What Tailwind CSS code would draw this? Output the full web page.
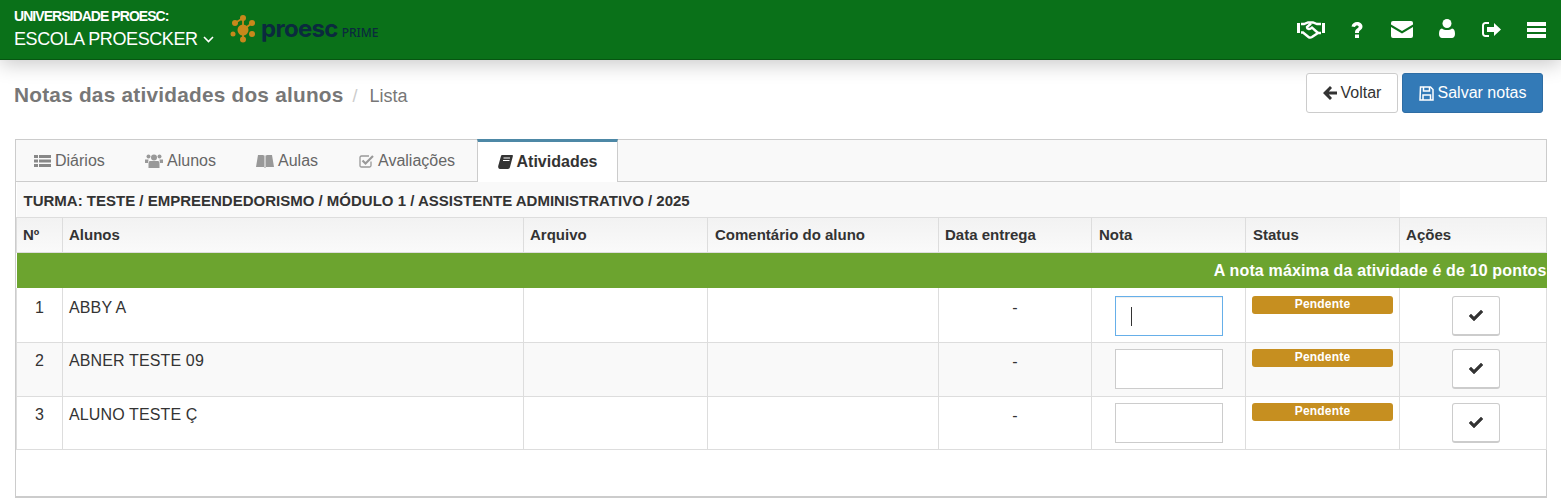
<!DOCTYPE html>
<html lang="pt"><head><meta charset="utf-8">
<script src="https://cdn.jsdelivr.net/npm/@tailwindcss/browser@4"></script>
</head>
<body class="bg-white font-['Liberation_Sans',Arial,sans-serif] text-[#333] overflow-hidden w-[1561px] h-[499px]">
<header class="h-[60px] bg-[#0a7119] border-b border-[#075512] flex items-center justify-between pl-[14px] pr-[15px] shadow-[0_4px_20px_rgba(0,0,0,0.22)] relative">
  <div class="flex items-start">
    <div class="w-[214px] text-white">
      <div class="text-[14px] leading-[16px] font-bold tracking-[-0.95px] mt-[-2px]">UNIVERSIDADE PROESC:</div>
      <div class="text-[18px] leading-[20px] mt-[5px] tracking-[-0.4px] flex items-center gap-[5px]">ESCOLA PROESCKER
        <svg width="11" height="7" viewBox="0 0 11 7" fill="none" stroke="#fff" stroke-width="1.6"><path d="M1 1l4.500 4.500L10 1"/></svg>
      </div>
    </div>
    <div class="flex items-center mt-[4px]">
      <svg width="30" height="30" viewBox="0 0 30 30" fill="#c8881b" stroke="#c8881b">
        <path stroke-width="1.8" fill="none" d="M7 9L15 4 15 25M24 9L15 16"/>
        <g stroke="none"><circle cx="15" cy="4" r="3"/><circle cx="7" cy="9" r="3"/><circle cx="24" cy="9" r="3"/><circle cx="15" cy="16" r="5.500"/><circle cx="5" cy="20" r="2.500"/><circle cx="24" cy="20" r="3"/><circle cx="15" cy="25.500" r="3"/></g>
      </svg>
      <span class="font-['Inter',sans-serif] text-[24px] leading-[30px] font-bold tracking-[-0.7px] text-[#0b2a3e] ml-[3px] -mt-[1px]">proesc</span>
      <span class="font-['Noto_Sans',sans-serif] text-[12px] leading-[14px] font-medium text-[#0b2a3e] ml-[4px] mt-[7px]">PRIME</span>
    </div>
  </div>
  <nav class="flex items-center text-white">
    <svg class="mr-[26px]" width="28" height="18" viewBox="0 0 28 18" fill="none" stroke="#fff" stroke-width="2.400"><path d="M4 3h3l4-1.500h5l4 1.500h4"/><path d="M1.500 2v10M26.500 2v10" stroke-width="3"/><path d="M4 11.500h2l5.500 4.500c1 .8 2.200.8 3.500 0l6-4 3 0"/><path d="M14 2.500l-4 3.500c0 2.500 3 2.500 5 .7l6 5.300"/></svg>
    <svg class="mr-[28px]" width="12" height="16" viewBox="0 0 12 16" fill="#fff"><path d="M4 12.500h4V16H4zM.5 4.500C1 1.500 3.500 0 6 0c3 0 5.500 2 5.500 4.500 0 2.500-1.500 3.200-2.500 3.900-.8.500-1 .9-1 2.600H4c0-2.500.6-3.500 1.900-4.300 1-.6 1.800-1 1.800-1.900 0-.8-.7-1.400-1.700-1.400-1 0-1.700.6-2.100 1.700z"/></svg>
    <svg class="mr-[26px]" width="22" height="17" viewBox="0 0 22 17" fill="#fff"><path d="M2 0h18a2 2 0 0 1 2 2v1.500L11 10 0 3.500V2a2 2 0 0 1 2-2z"/><path d="M0 6l11 6.500L22 6v9a2 2 0 0 1-2 2H2a2 2 0 0 1-2-2z"/></svg>
    <svg class="mr-[27px] -mt-[2px]" width="16" height="19" viewBox="0 0 16 19" fill="#fff"><circle cx="8" cy="4.500" r="4.500"/><path d="M3 9.500c1.200 1 3 1.500 5 1.500s3.800-.5 5-1.500c2 .3 3 2 3 5.500 0 2.500-1.500 4-3 4H3c-1.500 0-3-1.500-3-4 0-3.500 1-5.200 3-5.500z"/></svg>
    <svg class="mr-[26px]" width="19" height="15" viewBox="0 0 19 15" fill="#fff"><path d="M7 0v2H3.500C2.700 2 2 2.700 2 3.500v8c0 .8.700 1.500 1.500 1.500H7v2H3.500C1.500 15 0 13.500 0 11.500v-8C0 1.500 1.500 0 3.500 0z"/><path d="M12 1l7 6.500-7 6.500V10H5V5h7z"/></svg>
    <div class="w-[19px] flex flex-col gap-[2px]"><div class="h-[4px] bg-white"></div><div class="h-[4px] bg-white"></div><div class="h-[4px] bg-white"></div></div>
  </nav>
</header>
<main class="relative">
  <div class="flex items-start justify-between pl-[14px] pr-[18px] pt-[13px] h-[79px]">
    <div class="flex items-baseline mt-[9px]">
      <span class="text-[20.800px] leading-[26px] font-bold text-[#777] tracking-[0.23px]">Notas das atividades dos alunos</span>
      <span class="text-[18px] text-[#ccc] ml-[9px]">/</span>
      <span class="text-[18px] text-[#777] ml-[12px]">Lista</span>
    </div>
    <div class="flex gap-[4px]">
      <button class="w-[92px] h-[40px] bg-white border border-[#ccc] rounded-[3px] text-[16px] text-[#333] flex items-center justify-center gap-[4px]">
        <svg width="14" height="14" viewBox="0 0 14 14" fill="#333"><path d="M7 0l2 2-3.200 3.400H14v3.200H5.800L9 12l-2 2-7-7z"/></svg>Voltar</button>
      <button class="w-[141px] h-[40px] bg-[#337ab7] border border-[#2e6da4] rounded-[3px] text-[16px] text-white flex items-center justify-center gap-[4px]">
        <svg width="15" height="15" viewBox="0 0 15 15" fill="none" stroke="#fff" stroke-width="1.500"><path d="M1.500 1h10l2.500 2.500V14H1z"/><path d="M4.500 1v4h6V1M4 14V9h7.500v5"/></svg>Salvar notas</button>
    </div>
  </div>
  <section class="mx-[15px] w-[1532px] h-[359px] border border-[#ccc] border-b-2 bg-white">
    <div class="h-[42px] bg-[#f9f9f9] border-b border-[#ccc] flex text-[16px] text-[#666] pl-[18px] relative">
      <div class="flex items-center gap-[4px] w-[111px]"><svg width="17" height="12" viewBox="0 0 17 12" fill="#888"><path d="M0 0h4v3H0zM5 0h12v3H5zM0 4.500h4v3H0zM5 4.500h12v3H5zM0 9h4v3H0zM5 9h12v3H5z"/></svg>Diários</div>
      <div class="flex items-center gap-[4px] w-[111px]"><svg width="18" height="14" viewBox="0 0 18 14" fill="#999"><circle cx="9" cy="3.500" r="3"/><circle cx="3.500" cy="2.500" r="2"/><circle cx="14.500" cy="2.500" r="2"/><path d="M5 7h8c1 0 1.500 1 1.500 3v4h-11v-4c0-2 .5-3 1.500-3zM0 5.500h3.500L3 9H0zM14.500 5.500H18V9h-3z"/></svg>Alunos</div>
      <div class="flex items-center gap-[4px] w-[103px]"><svg width="18" height="14" viewBox="0 0 18 14" fill="#999"><path d="M2 1h5l2 1 2-1h5l2 12H10l-1 1-1-1H0z"/><path d="M9 2v11" stroke="#f9f9f9"/></svg>Aulas</div>
      <div class="flex items-center gap-[4px] w-[118px]"><svg width="15" height="14" viewBox="0 0 15 14" fill="none" stroke="#999" stroke-width="1.300"><path d="M12 7.500V11.500c0 1-.6 1.500-1.500 1.500h-8C1.500 13 1 12.500 1 11.500v-8C1 2.500 1.500 2 2.500 2H10"/><path d="M3.500 6.500L6.500 9.500 14 2" stroke-width="2.200"/></svg>Avaliações</div>
      <div class="w-[141px] h-[43px] -mt-[1px] bg-white border-x border-[#ccc] border-t-[3px] border-t-[#4d88a6] flex items-center justify-center gap-[4px] font-bold text-[#333]"><svg width="15" height="14" viewBox="0 0 15 14" fill="#333"><path d="M4 0h10c1 0 1 1 .8 1.500L12 12c-.2 1-1 2-2 2H2c-1.500 0-2-1.500-1.800-3L3 1c.2-.6.500-1 1-1z"/><path d="M5.500 3h6.500M5 5.500h6.500" stroke="#fff" stroke-width="1"/></svg>Atividades</div>
    </div>
    <table class="border-collapse table-fixed w-[1530px] text-[16px] text-[#333] tracking-[0.13px]">
      <colgroup><col class="w-[46px]"><col class="w-[461px]"><col class="w-[184px]"><col class="w-[231px]"><col class="w-[153px]"><col class="w-[154px]"><col class="w-[154px]"><col class="w-[147px]"></colgroup>
      <thead>
        <tr class="h-[35px]">
          <td colspan="7" class="bg-[#f9f9f9] text-[15px] font-bold pl-[7px] pt-[3px] border-b border-[#ddd] tracking-normal text-[#333]">TURMA: TESTE / EMPREENDEDORISMO / MÓDULO 1 / ASSISTENTE ADMINISTRATIVO / 2025</td>
          <td class="bg-white border-b border-[#ddd]"></td>
        </tr>
        <tr class="h-[35px] bg-gradient-to-b from-[#f2f2f2] to-[#fafafa] text-[15px] font-bold text-left tracking-normal">
          <th class="border border-t-0 border-[#ddd] pt-[2px] pl-[6px]">Nº</th>
          <th class="border border-t-0 border-[#ddd] pt-[2px] pl-[6px]">Alunos</th>
          <th class="border border-t-0 border-[#ddd] pt-[2px] pl-[6px]">Arquivo</th>
          <th class="border border-t-0 border-[#ddd] pt-[2px] pl-[7px]">Comentário do aluno</th>
          <th class="border border-t-0 border-[#ddd] pt-[2px] pl-[6px]">Data entrega</th>
          <th class="border border-t-0 border-[#ddd] pt-[2px] pl-[7px]">Nota</th>
          <th class="border border-t-0 border-[#ddd] pt-[2px] pl-[7px]">Status</th>
          <th class="border border-t-0 border-[#ddd] pt-[2px] pl-[6px]">Ações</th>
        </tr>
        <tr class="h-[36px] bg-[#6ca42f]"><td colspan="8" class="text-right font-bold text-white pt-[2px] tracking-[0.15px]">A nota máxima da atividade é de 10 pontos</td></tr>
      </thead>
      <tbody>
        <tr class="h-[54px] align-top">
          <td class="border border-t-0 border-[#ddd] text-center pt-[8px]">1</td>
          <td class="border border-t-0 border-[#ddd] pl-[6px] pt-[8px]">ABBY A</td>
          <td class="border border-t-0 border-[#ddd]"></td><td class="border border-t-0 border-[#ddd]"></td>
          <td class="border border-t-0 border-[#ddd] text-center pt-[8px]">-</td>
          <td class="border border-t-0 border-[#ddd] pt-[8px]"><div class="ml-[23px] w-[108px] h-[40px] border border-[#66afe9] bg-white shadow-[inset_0_1px_1px_rgba(0,0,0,0.075)] flex items-center pl-[15px]"><div class="w-px h-[19px] bg-[#333]"></div></div></td>
          <td class="border border-t-0 border-[#ddd] pt-[8px]"><div class="ml-[6px] w-[141px] h-[18px] rounded-[3px] bg-[#c68f20] text-white text-[12px] font-bold leading-[17px] text-center tracking-[0.2px]">Pendente</div></td>
          <td class="border border-t-0 border-[#ddd] pt-[8px]"><button class="ml-[52px] w-[48px] h-[40px] bg-white border border-[#ccc] border-b-2 rounded-[3px] flex items-center justify-center"><svg width="14" height="11" viewBox="0 0 14 11" fill="#333" stroke="#333" stroke-width="0.500"><path d="M5 11L0 6l2-2 3 3 7-7 2 2z"/></svg></button></td>
        </tr>
        <tr class="h-[54px] align-top bg-[#f9f9f9]">
          <td class="border border-[#ddd] text-center pt-[6px]">2</td>
          <td class="border border-[#ddd] pl-[6px] pt-[6px]">ABNER TESTE 09</td>
          <td class="border border-[#ddd]"></td><td class="border border-[#ddd]"></td>
          <td class="border border-[#ddd] text-center pt-[7px]">-</td>
          <td class="border border-[#ddd] pt-[6px]"><div class="ml-[23px] w-[108px] h-[40px] border border-[#ccc] bg-white"></div></td>
          <td class="border border-[#ddd] pt-[6px]"><div class="ml-[6px] w-[141px] h-[18px] rounded-[3px] bg-[#c68f20] text-white text-[12px] font-bold leading-[17px] text-center tracking-[0.2px]">Pendente</div></td>
          <td class="border border-[#ddd] pt-[6px]"><button class="ml-[52px] w-[48px] h-[40px] bg-white border border-[#ccc] border-b-2 rounded-[3px] flex items-center justify-center"><svg width="14" height="11" viewBox="0 0 14 11" fill="#333" stroke="#333" stroke-width="0.500"><path d="M5 11L0 6l2-2 3 3 7-7 2 2z"/></svg></button></td>
        </tr>
        <tr class="h-[53px] align-top">
          <td class="border border-[#ddd] text-center pt-[6px]">3</td>
          <td class="border border-[#ddd] pl-[6px] pt-[6px]">ALUNO TESTE Ç</td>
          <td class="border border-[#ddd]"></td><td class="border border-[#ddd]"></td>
          <td class="border border-[#ddd] text-center pt-[7px]">-</td>
          <td class="border border-[#ddd] pt-[6px]"><div class="ml-[23px] w-[108px] h-[40px] border border-[#ccc] bg-white"></div></td>
          <td class="border border-[#ddd] pt-[6px]"><div class="ml-[6px] w-[141px] h-[18px] rounded-[3px] bg-[#c68f20] text-white text-[12px] font-bold leading-[17px] text-center tracking-[0.2px]">Pendente</div></td>
          <td class="border border-[#ddd] pt-[6px]"><button class="ml-[52px] w-[48px] h-[40px] bg-white border border-[#ccc] border-b-2 rounded-[3px] flex items-center justify-center"><svg width="14" height="11" viewBox="0 0 14 11" fill="#333" stroke="#333" stroke-width="0.500"><path d="M5 11L0 6l2-2 3 3 7-7 2 2z"/></svg></button></td>
        </tr>
      </tbody>
    </table>
  </section>
</main>
</body></html>
